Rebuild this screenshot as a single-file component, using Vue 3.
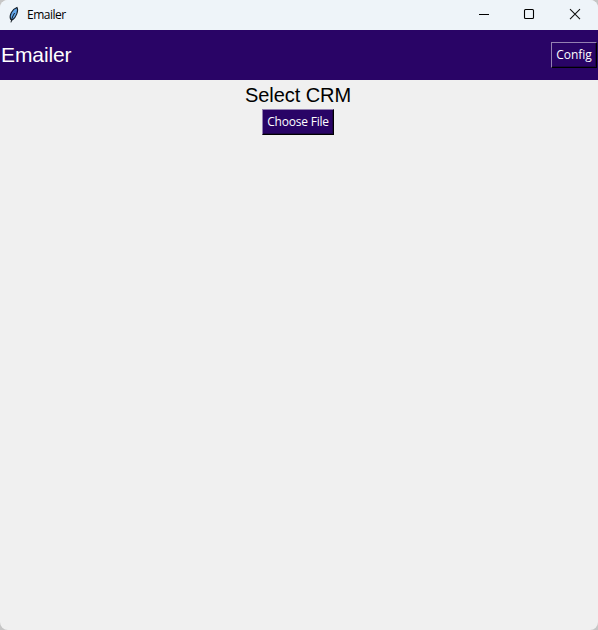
<script setup>
const title = 'Emailer'
</script>

<template>
  <div class="window">
    <div class="titlebar">
      <svg class="feather" width="20" height="20" viewBox="0 0 20 20">
        <path d="M6.6 14.2C5 10.4 8.2 4 12.9 2.4C15 5.6 12 12.2 8.6 14.8Z" fill="#62a5e8" stroke="#17202b" stroke-width="1.1" />
        <path d="M10.6 8C9 10.5 7.8 13 7 17.4" fill="none" stroke="#101820" stroke-width="1" />
      </svg>
      <span class="caption">{{ title }}</span>
      <div class="controls">
        <svg width="46" height="30" viewBox="0 0 46 30"><path d="M19 14.5H29" stroke="#000" /></svg>
        <svg width="46" height="30" viewBox="0 0 46 30"><rect x="18.5" y="9.5" width="9" height="9" rx="1" fill="none" stroke="#000" stroke-width="1.1" /></svg>
        <svg width="46" height="30" viewBox="0 0 46 30"><path d="M18 9.2L28 19.2M28 9.2L18 19.2" stroke="#111" stroke-width="1.1" /></svg>
      </div>
    </div>
    <header class="header">
      <h1 class="heading">{{ title }}</h1>
      <button class="btn config">Config</button>
    </header>
    <main class="content">
      <h2 class="label">Select CRM</h2>
      <button class="btn choose">Choose File</button>
    </main>
  </div>
</template>

<style>
body { margin: 0; background: #c6c6c6; overflow: hidden; }
</style>

<style scoped>
.window {
  width: 598px;
  height: 630px;
  box-sizing: border-box;
  display: flex;
  flex-direction: column;
  overflow: hidden;
  border-radius: 8px;
  background: #f0f0f0;
}
.titlebar {
  height: 30px;
  flex: none;
  display: flex;
  align-items: center;
  background: #eef4f9;
  padding-left: 4px;
}
.feather { margin-top: -1px; }
.caption {
  font: 12px/16px "Open Sans", "Noto Sans", sans-serif;
  letter-spacing: -0.5px;
  color: #000;
  margin-left: 3px;
}
.controls { margin-left: auto; display: flex; height: 30px; }
.header {
  height: 50px;
  flex: none;
  display: flex;
  align-items: center;
  justify-content: space-between;
  background: #290466;
  padding: 0 1px;
}
.heading, .label {
  margin: 0;
  font-family: "Liberation Sans", Arial, sans-serif;
  font-weight: 400;
}
.heading { font-size: 21px; line-height: 32px; letter-spacing: -0.1px; color: #fff; }
.label { font-size: 20px; line-height: 28px; padding-top: 1px; letter-spacing: -0.05px; color: #000; }
.content { flex: 1; display: flex; flex-direction: column; align-items: center; padding-right: 2px; }
.btn {
  box-sizing: border-box;
  height: 26px;
  padding: 0;
  border-style: solid;
  border-width: 1px;
  border-color: #9481b2 #000 #000 #9481b2;
  box-shadow: inset -1px -1px #1d0348;
  background: #290466;
  color: #fff;
  font: 12px/24px "Open Sans", "Noto Sans", sans-serif;
  letter-spacing: -0.2px;
  white-space: nowrap;
}
.config { width: 46px; letter-spacing: 0; }
.choose { width: 72px; }
</style>
